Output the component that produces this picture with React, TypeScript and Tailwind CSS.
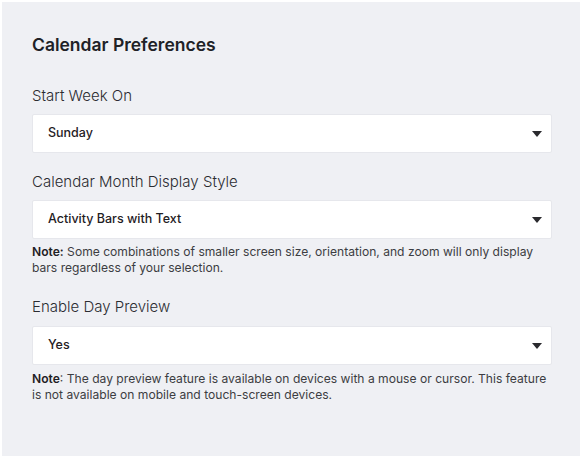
import React from "react";

function Caret() {
  return (
    <svg width="10" height="6" viewBox="0 0 10 6" className="shrink-0">
      <path d="M0 0 L10 0 L5 6 Z" fill="#2a2a2e" />
    </svg>
  );
}

function Select({ value }: { value: string }) {
  return (
    <div className="flex h-[39px] items-center justify-between rounded-[2px] border border-[#e6e7ec] bg-white pl-[15px] pr-[9px]">
      <span className="text-[12.5px] font-medium text-[#1f2024]">{value}</span>
      <Caret />
    </div>
  );
}

export default function App() {
  return (
    <div
      className="h-[460px] w-[584px] bg-white p-[2px]"
      style={{ fontFamily: "Inter, 'Noto Sans', sans-serif" }}
    >
      <div className="h-[454px] w-[578px] bg-[#eff0f4] pl-[30px] pr-[28px] pt-[31px]">
        <h1 className="text-[17.5px] font-semibold leading-[24px] text-[#202126]">
          Calendar Preferences
        </h1>

        <div className="mt-[29px] mb-[8px] text-[15px] font-light leading-[20px] text-[#2b2c31]">
          Start Week On
        </div>
        <Select value="Sunday" />

        <div className="mt-[19px] mb-[8px] text-[15px] font-light leading-[20px] text-[#2b2c31]">
          Calendar Month Display Style
        </div>
        <Select value="Activity Bars with Text" />
        <p className="mt-[5px] text-[12.1px] leading-[16px] text-[#3c3d42]">
          <span className="font-semibold text-[#1f2024]">Note:</span> Some
          combinations of smaller screen size, orientation, and zoom will only
          display bars regardless of your selection.
        </p>

        <div className="mt-[21px] mb-[9px] text-[15px] font-light leading-[20px] text-[#2b2c31]">
          Enable Day Preview
        </div>
        <Select value="Yes" />
        <p className="mt-[6px] text-[12.1px] leading-[16px] text-[#3c3d42]">
          <span className="font-semibold text-[#1f2024]">Note</span>: The day
          preview feature is available on devices with a mouse or cursor. This
          feature is not available on mobile and touch-screen devices.
        </p>
      </div>
    </div>
  );
}
